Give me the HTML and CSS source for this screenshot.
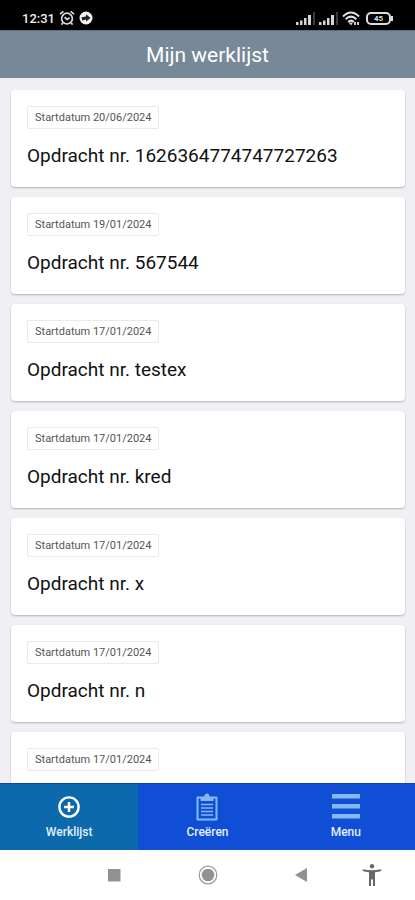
FILE: index.html
```html
<!DOCTYPE html>
<html lang="nl">
<head>
<meta charset="utf-8">
<meta name="viewport" content="width=device-width, initial-scale=1">
<title>Mijn werklijst</title>
<link rel="stylesheet" href="styles.css">
</head>
<body>
<div class="status">
  <div class="status-group">
    <span class="clock">12:31</span>
    <svg class="alarm" width="16" height="16" viewBox="0 0 16 16" fill="none" stroke="#ddd" stroke-width="1.7"><circle cx="8" cy="8.6" r="5.4"/><path d="M1 4.2 4.4 1.3M15 4.2 11.6 1.3M3.8 13l-1.4 1.6M12.2 13l1.4 1.6M5.6 7.2 8 9.4l2.6-1.6"/></svg>
    <svg width="14" height="14" viewBox="0 0 14 14"><circle cx="7" cy="7" r="6.5" fill="#f2f2f2"/><path d="M2.5 6.2 7 5.4V3.3l4.6 3.7L7 10.4V8.6l-3.8.9z" fill="#222"/></svg>
  </div>
  <div class="status-group">
    <svg width="19" height="13" viewBox="0 0 19 13" fill="#d5d5d5"><path d="M0 10h2.5v3H0zM4 8.500h2.500v4.500H4zM8 6h2.500v7H8zM12 3h3v10h-3z"/><path d="M17.500 0h1v13h-1z" fill="#777"/></svg>
    <svg width="19" height="13" viewBox="0 0 19 13" fill="#d5d5d5"><path d="M0 10h2.500v3H0zM4 8.500h2.500v4.500H4zM8 6h2.500v7H8zM12 3h3v10h-3z"/><path d="M17.500 0h1v13h-1z" fill="#777"/></svg>
    <svg width="18" height="15" viewBox="0 0 18 15"><g fill="none" stroke="#e2e2e2" stroke-width="2"><path d="M1 5.500Q9-2.500 17 5.500M3.600 8.300Q9 3 14.400 8.300M6.200 11Q9 8.200 11.800 11"/></g><path d="m6.500 11.500 2.500 3 2-3zM12 11h2v3h-2zM15 11h2v3h-2z" fill="#ccc"/></svg>
    <span class="battery">45</span>
  </div>
</div>
<header class="header"><h1>Mijn werklijst</h1></header>
<main class="list">
  <article class="card"><span class="date">Startdatum 20/06/2024</span><h2>Opdracht nr. 1626364774747727263</h2></article>
  <article class="card"><span class="date">Startdatum 19/01/2024</span><h2>Opdracht nr. 567544</h2></article>
  <article class="card"><span class="date">Startdatum 17/01/2024</span><h2>Opdracht nr. testex</h2></article>
  <article class="card"><span class="date">Startdatum 17/01/2024</span><h2>Opdracht nr. kred</h2></article>
  <article class="card"><span class="date">Startdatum 17/01/2024</span><h2>Opdracht nr. x</h2></article>
  <article class="card"><span class="date">Startdatum 17/01/2024</span><h2>Opdracht nr. n</h2></article>
  <article class="card"><span class="date">Startdatum 17/01/2024</span></article>
</main>
<nav class="tabs">
  <button class="tab active" type="button">
    <svg width="28" height="28" viewBox="0 0 28 28" fill="none" stroke="#fff"><circle cx="14" cy="14" r="9.600" stroke-width="2.400"/><path d="M14 9v10M9 14h10" stroke-width="2.400"/></svg>
    <span>Werklijst</span>
  </button>
  <button class="tab" type="button">
    <svg width="28" height="28" viewBox="0 0 28 28"><path d="M4.500 4.500h19v22h-19z" fill="none" stroke="#84b9f0" stroke-width="2" stroke-linejoin="round"/><path d="M7.500 8V4.500h3.500c.500-2 1.200-4 3-4s2.500 2 3 4h3.500V8z" fill="#84b9f0"/><path d="M8 11.500h12M8 15h12M8 18.500h12M8 22h12" stroke="#84b9f0" stroke-width="1.700"/></svg>
    <span>Creëren</span>
  </button>
  <button class="tab" type="button">
    <svg width="28" height="28" viewBox="0 0 28 28" fill="#84b9f0"><path d="M0 1h28v4.500H0zM0 11h28v4.500H0zM0 21h28v4.500H0z"/></svg>
    <span>Menu</span>
  </button>
</nav>
<div class="system">
  <button type="button" aria-label="Recent"><svg width="20" height="20" viewBox="0 0 20 20"><path d="M4 4h12.500v12.500H4z" fill="#929292"/></svg></button>
  <button type="button" aria-label="Home"><svg width="20" height="20" viewBox="0 0 20 20"><circle cx="10" cy="10" r="8.800" fill="none" stroke="#999" stroke-width="1.200"/><circle cx="10" cy="10" r="6.300" fill="#929292"/></svg></button>
  <button type="button" aria-label="Terug"><svg width="20" height="20" viewBox="0 0 20 20"><path d="M16 3v14L4 10z" fill="#929292"/></svg></button>
  <button class="access" type="button" aria-label="Toegankelijkheid"><svg width="20" height="22" viewBox="0 0 20 22" fill="#686868"><circle cx="10" cy="2.300" r="2.200"/><path d="M1 5.300q9 2 18 0l.4 1.700q-3 .9-6.400 1.200V22h-2v-6.500H9V22H7V8.200Q3.600 7.900.600 7z"/></svg></button>
</div>
</body>
</html>
```
FILE: styles.css
```css
* { box-sizing: border-box; }

body {
  margin: 0;
  height: 100vh;
  display: flex;
  flex-direction: column;
  overflow: hidden;
  background: #efeff4;
  font-family: Roboto, "Liberation Sans", sans-serif;
}

h1, h2 { margin: 0; font-weight: 400; }

button {
  padding: 0;
  border: 0;
  background: none;
  font: inherit;
}

.status {
  flex: none;
  height: 30px;
  padding: 8px 24px 0 22px;
  display: flex;
  justify-content: space-between;
  background: #000;
  color: #eee;
}

.status-group { height: 20px; display: flex; align-items: center; gap: 4px; }
.clock { font-size: 13px; font-weight: 500; }

.battery {
  position: relative;
  width: 25px;
  height: 13px;
  margin-left: 2px;
  border: 2px solid #ddd;
  border-radius: 5px;
  color: #ddd;
  font-size: 8px;
  font-weight: 700;
  line-height: 9px;
  text-align: center;
}

.battery::after {
  content: "";
  position: absolute;
  top: 2px;
  right: -4px;
  width: 2px;
  height: 5px;
  background: #ddd;
}

.header {
  flex: none;
  height: 48px;
  display: flex;
  align-items: center;
  justify-content: center;
  background: #778899;
  border-top: 1px solid #606d7a;
  color: #fff;
}

.header h1 { font-size: 21px; line-height: 28px; }

.list {
  flex: 1;
  min-height: 0;
  overflow: hidden;
  padding: 12px 10px 0 11px;
  display: flex;
  flex-direction: column;
  gap: 10px;
}

.card {
  flex: none;
  height: 97px;
  padding: 16px;
  background: #fff;
  border-radius: 4px;
  box-shadow: 0 1px 2px rgba(0, 0, 0, 0.25);
}

.date {
  display: block;
  width: max-content;
  height: 23px;
  padding: 0 7px;
  border: 1px solid #e9e9e9;
  border-radius: 2px;
  color: #555;
  font-size: 11px;
  line-height: 21px;
}

.card h2 {
  margin-top: 15px;
  color: #111;
  font-size: 19px;
  line-height: 24px;
}

.tabs {
  flex: none;
  height: 67px;
  display: grid;
  grid-template-columns: repeat(3, 1fr);
  background: #104ed6;
  border-top: 1px solid #0d45b0;
}

.tab {
  padding-top: 9px;
  display: flex;
  flex-direction: column;
  align-items: center;
  gap: 3px;
  color: #e4efff;
  font-size: 12px;
  font-weight: 500;
  line-height: 16px;
}

.tab.active { background: #0c69ac; }

.system {
  flex: none;
  height: 50px;
  padding: 0 33px 0 67px;
  display: grid;
  grid-template-columns: 94fr 94fr 92fr 35fr;
  align-items: center;
  background: #fff;
}

.system button { display: flex; justify-content: center; }
.system .access { justify-content: flex-end; }
```
